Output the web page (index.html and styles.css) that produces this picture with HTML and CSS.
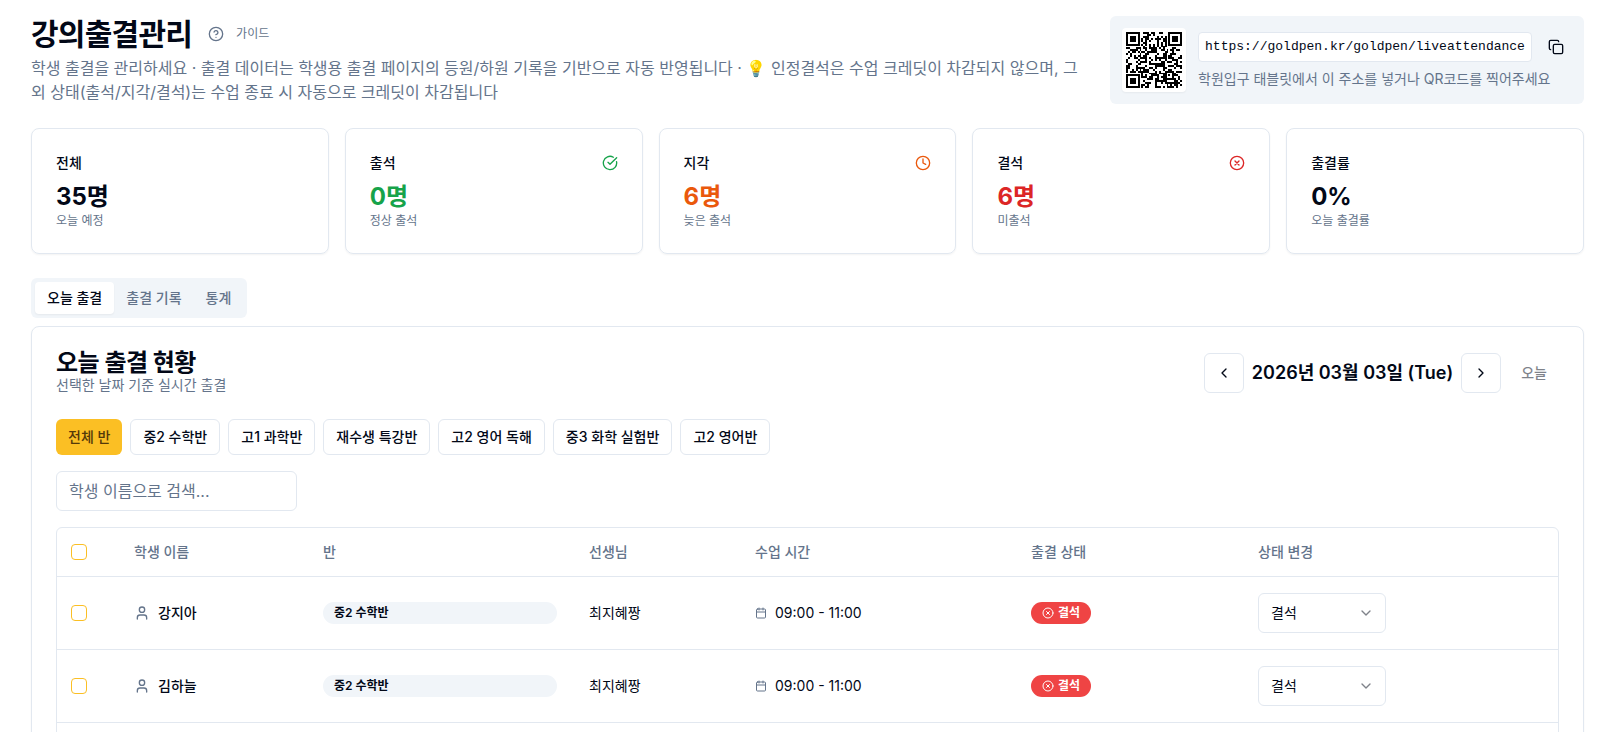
FILE: index.html
```html
<!DOCTYPE html>
<html lang="ko">
<head>
    <meta charset="UTF-8">
    <meta name="viewport" content="width=device-width, initial-scale=1.0">
    <title>강의출결관리</title>
    <link rel="stylesheet" href="styles.css">
</head>
<body>
    <!-- shared icons -->
    <svg class="sprite" aria-hidden="true">
        <symbol id="i-x-circle" viewBox="0 0 24 24"><circle cx="12" cy="12" r="10"/><path d="m15 9-6 6M9 9l6 6"/></symbol>
        <symbol id="i-user" viewBox="0 0 24 24"><path d="M19 21v-2a4 4 0 0 0-4-4H9a4 4 0 0 0-4 4v2"/><circle cx="12" cy="7" r="4"/></symbol>
        <symbol id="i-calendar" viewBox="0 0 24 24"><path d="M8 2v4M16 2v4M3 10h18"/><rect x="3" y="4" width="18" height="18" rx="2"/></symbol>
        <symbol id="i-down" viewBox="0 0 24 24"><path d="m6 9 6 6 6-6"/></symbol>
    </svg>

    <main class="page">
        <header class="page-header">
            <div class="intro">
                <div class="title-row">
                    <h1>강의출결관리</h1>
                    <button type="button" class="guide">
                        <svg class="icon" viewBox="0 0 24 24"><circle cx="12" cy="12" r="10"/><path d="M9.09 9a3 3 0 0 1 5.83 1c0 2-3 3-3 3M12 17h.01"/></svg>
                        가이드
                    </button>
                </div>
                <p>학생 출결을 관리하세요 · 출결 데이터는 학생용 출결 페이지의 등원/하원 기록을 기반으로 자동 반영됩니다 · 💡 인정결석은 수업 크레딧이 차감되지 않으며, 그 외 상태(출석/지각/결석)는 수업 종료 시 자동으로 크레딧이 차감됩니다</p>
            </div>
            <div class="share">
                <div class="qr"><svg id="qr" viewBox="0 0 29 29" shape-rendering="crispEdges"><path id="qrPath"/></svg></div>
                <div class="share-text">
                    <div class="url-row">
                        <code id="url">https://goldpen.kr/goldpen/liveattendance</code>
                        <button type="button" class="copy" aria-label="복사">
                            <svg class="icon" viewBox="0 0 24 24"><rect x="8" y="8" width="14" height="14" rx="2"/><path d="M4 16c-1.100 0-2-.9-2-2V4c0-1.100.9-2 2-2h10c1.100 0 2 .9 2 2"/></svg>
                        </button>
                    </div>
                    <p>학원입구 태블릿에서 이 주소를 넣거나 QR코드를 찍어주세요</p>
                </div>
            </div>
        </header>

        <section class="stats">
            <div class="stat">
                <div class="stat-head"><h3>전체</h3></div>
                <div class="number">35명</div>
                <p>오늘 예정</p>
            </div>
            <div class="stat green">
                <div class="stat-head">
                    <h3>출석</h3>
                    <svg class="icon" viewBox="0 0 24 24"><path d="M21.801 10A10 10 0 1 1 17 3.335"/><path d="m9 11 3 3L22 4"/></svg>
                </div>
                <div class="number">0명</div>
                <p>정상 출석</p>
            </div>
            <div class="stat orange">
                <div class="stat-head">
                    <h3>지각</h3>
                    <svg class="icon" viewBox="0 0 24 24"><circle cx="12" cy="12" r="10"/><path d="M12 6v6l4 2"/></svg>
                </div>
                <div class="number">6명</div>
                <p>늦은 출석</p>
            </div>
            <div class="stat red">
                <div class="stat-head">
                    <h3>결석</h3>
                    <svg class="icon"><use href="#i-x-circle"/></svg>
                </div>
                <div class="number">6명</div>
                <p>미출석</p>
            </div>
            <div class="stat">
                <div class="stat-head"><h3>출결률</h3></div>
                <div class="number">0%</div>
                <p>오늘 출결률</p>
            </div>
        </section>

        <div class="tabs" role="tablist">
            <button type="button" role="tab" aria-selected="true" class="active">오늘 출결</button>
            <button type="button" role="tab" aria-selected="false">출결 기록</button>
            <button type="button" role="tab" aria-selected="false">통계</button>
        </div>

        <section class="panel">
            <div class="panel-header">
                <div>
                    <h2>오늘 출결 현황</h2>
                    <p>선택한 날짜 기준 실시간 출결</p>
                </div>
                <div class="date-nav">
                    <button type="button" class="square" aria-label="이전 날짜"><svg class="icon" viewBox="0 0 24 24"><path d="m15 18-6-6 6-6"/></svg></button>
                    <span class="date">2026년 03월 03일 (Tue)</span>
                    <button type="button" class="square" aria-label="다음 날짜"><svg class="icon" viewBox="0 0 24 24"><path d="m9 18 6-6-6-6"/></svg></button>
                    <button type="button" class="today" disabled>오늘</button>
                </div>
            </div>

            <div class="filters">
                <button type="button" class="active">전체 반</button>
                <button type="button">중2 수학반</button>
                <button type="button">고1 과학반</button>
                <button type="button">재수생 특강반</button>
                <button type="button">고2 영어 독해</button>
                <button type="button">중3 화학 실험반</button>
                <button type="button">고2 영어반</button>
            </div>

            <input type="text" class="search" placeholder="학생 이름으로 검색..." aria-label="학생 이름으로 검색">

            <div class="table-wrap">
                <table>
                    <colgroup>
                        <col class="c-check"><col class="c-name"><col class="c-class"><col class="c-teacher"><col class="c-time"><col class="c-status"><col class="c-change">
                    </colgroup>
                    <thead>
                        <tr>
                            <th><input type="checkbox" aria-label="전체 선택"></th>
                            <th>학생 이름</th>
                            <th>반</th>
                            <th>선생님</th>
                            <th>수업 시간</th>
                            <th>출결 상태</th>
                            <th>상태 변경</th>
                        </tr>
                    </thead>
                    <tbody>
                        <tr>
                            <td><input type="checkbox" aria-label="강지아 선택"></td>
                            <td><div class="cell name"><svg class="icon muted"><use href="#i-user"/></svg>강지아</div></td>
                            <td><div class="badge">중2 수학반</div></td>
                            <td>최지혜짱</td>
                            <td><div class="cell"><svg class="icon small muted"><use href="#i-calendar"/></svg>09:00 - 11:00</div></td>
                            <td><div class="badge absent"><svg class="icon small"><use href="#i-x-circle"/></svg>결석</div></td>
                            <td>
                                <div class="select">
                                    <select aria-label="강지아 상태 변경"><option>결석</option></select>
                                    <svg class="icon"><use href="#i-down"/></svg>
                                </div>
                            </td>
                        </tr>
                        <tr>
                            <td><input type="checkbox" aria-label="김하늘 선택"></td>
                            <td><div class="cell name"><svg class="icon muted"><use href="#i-user"/></svg>김하늘</div></td>
                            <td><div class="badge">중2 수학반</div></td>
                            <td>최지혜짱</td>
                            <td><div class="cell"><svg class="icon small muted"><use href="#i-calendar"/></svg>09:00 - 11:00</div></td>
                            <td><div class="badge absent"><svg class="icon small"><use href="#i-x-circle"/></svg>결석</div></td>
                            <td>
                                <div class="select">
                                    <select aria-label="김하늘 상태 변경"><option>결석</option></select>
                                    <svg class="icon"><use href="#i-down"/></svg>
                                </div>
                            </td>
                        </tr>
                    </tbody>
                </table>
            </div>
        </section>
    </main>
    <script src="qr.js"></script>
</body>
</html>
```
FILE: styles.css
```css
* {
    box-sizing: border-box;
}
body {
    margin: 0;
    font-family: Inter, "Noto Sans CJK KR", sans-serif;
    font-size: 14px;
    line-height: 20px;
    color: #020817;
    background-color: #ffffff;
}
h1, h2, h3, p {
    margin: 0;
}
button, input, select {
    font: inherit;
    color: inherit;
}
button {
    display: inline-flex;
    align-items: center;
    justify-content: center;
    padding: 0;
    border: none;
    background: none;
    white-space: nowrap;
    cursor: pointer;
}
.sprite {
    display: none;
}
.icon {
    width: 16px;
    height: 16px;
    flex-shrink: 0;
    fill: none;
    stroke: currentColor;
    stroke-width: 2;
    stroke-linecap: round;
    stroke-linejoin: round;
}
.icon.small {
    width: 12px;
    height: 12px;
}
.icon.muted {
    color: #64748b;
}
.page {
    padding: 16px 38px 24px 31px;
}

/* header */
.page-header {
    display: flex;
    justify-content: space-between;
    gap: 24px;
    margin-bottom: 24px;
}
.intro {
    flex: 1;
}
.title-row {
    display: flex;
    align-items: center;
    gap: 16px;
    margin-bottom: 4px;
}
h1 {
    font-size: 30px;
    line-height: 36px;
    font-weight: 700;
    letter-spacing: -0.025em;
}
.guide {
    gap: 12px;
    font-size: 12px;
    color: #64748b;
}
.intro p {
    font-size: 16px;
    line-height: 24px;
    color: #64748b;
}
.share {
    display: flex;
    align-items: center;
    gap: 12px;
    width: 474px;
    padding: 12px;
    border-radius: 6px;
    background-color: #f1f5f9;
}
.qr {
    padding: 4px;
    border-radius: 4px;
    background-color: #ffffff;
    box-shadow: 0 1px 2px rgba(0, 0, 0, 0.05);
}
.qr svg {
    display: block;
    width: 56px;
    height: 56px;
}
.share-text {
    flex: 1;
}
.url-row {
    display: flex;
    align-items: center;
    gap: 8px;
    margin-bottom: 6px;
}
.url-row code {
    flex: 1;
    padding: 4px 6px;
    border: 1px solid #e2e8f0;
    border-radius: 4px;
    background-color: #ffffff;
    font-family: "Liberation Mono", monospace;
    font-size: 13px;
    text-align: center;
}
.copy {
    width: 32px;
    height: 32px;
}
.share-text p {
    color: #64748b;
}

/* stat cards */
.stats {
    display: grid;
    grid-template-columns: repeat(5, 1fr);
    gap: 16px;
    margin-bottom: 24px;
}
.stat {
    padding: 24px;
    border: 1px solid #e2e8f0;
    border-radius: 8px;
    box-shadow: 0 1px 2px rgba(0, 0, 0, 0.05);
}
.stat-head {
    display: flex;
    align-items: center;
    justify-content: space-between;
    margin-bottom: 8px;
}
.stat h3 {
    font-size: 14px;
    font-weight: 500;
}
.number {
    font-size: 24px;
    line-height: 32px;
    font-weight: 700;
}
.stat p {
    font-size: 12px;
    line-height: 16px;
    color: #64748b;
}
.green .icon, .green .number {
    color: #16a34a;
}
.orange .icon, .orange .number {
    color: #ea580c;
}
.red .icon, .red .number {
    color: #dc2626;
}

/* tabs */
.tabs {
    display: inline-flex;
    padding: 4px;
    margin-bottom: 8px;
    border-radius: 6px;
    background-color: #f1f5f9;
    vertical-align: top;
}
.tabs button {
    padding: 6px 12px;
    border-radius: 4px;
    font-weight: 500;
    color: #64748b;
}
.tabs .active {
    color: #020817;
    background-color: #ffffff;
    box-shadow: 0 1px 2px rgba(0, 0, 0, 0.05);
}

/* attendance panel */
.panel {
    padding: 24px;
    border: 1px solid #e2e8f0;
    border-radius: 8px;
    box-shadow: 0 1px 2px rgba(0, 0, 0, 0.05);
}
.panel-header {
    display: flex;
    align-items: center;
    justify-content: space-between;
    margin-bottom: 24px;
}
h2 {
    font-size: 24px;
    line-height: 24px;
    font-weight: 600;
    letter-spacing: -0.025em;
}
.panel-header p {
    color: #64748b;
}
.date-nav {
    display: flex;
    align-items: center;
    gap: 8px;
}
.square {
    width: 40px;
    height: 40px;
    border: 1px solid #e2e8f0;
    border-radius: 6px;
}
.date {
    font-size: 18px;
    line-height: 28px;
    font-weight: 600;
}
.today {
    padding: 8px 12px;
    font-weight: 500;
    opacity: 0.5;
}
.filters {
    display: flex;
    flex-wrap: wrap;
    gap: 8px;
    margin-bottom: 16px;
}
.filters button {
    height: 36px;
    padding: 0 12px;
    border: 1px solid #e2e8f0;
    border-radius: 6px;
    font-weight: 500;
}
.filters .active {
    border: none;
    background-color: #fbbf24;
    color: #54390a;
}
.search {
    display: block;
    width: 241px;
    height: 40px;
    padding: 8px 12px;
    margin-bottom: 16px;
    border: 1px solid #e2e8f0;
    border-radius: 6px;
    font-size: 16px;
}
.search::placeholder {
    color: #64748b;
}

/* table */
.table-wrap {
    padding-bottom: 16px;
    border: 1px solid #e2e8f0;
    border-radius: 6px;
}
table {
    width: 100%;
    table-layout: fixed;
    border-spacing: 0;
}
.c-check { width: 61px; }
.c-name { width: 189px; }
.c-class { width: 266px; }
.c-teacher { width: 166px; }
.c-time { width: 276px; }
.c-status { width: 227px; }
.c-change { width: 316px; }
th, td {
    padding: 0 16px;
    border-bottom: 1px solid #e2e8f0;
    text-align: left;
    vertical-align: middle;
}
th {
    height: 49px;
    font-weight: 500;
    color: #64748b;
}
td {
    height: 73px;
}
th:first-child, td:first-child {
    padding: 0 14px;
}
input[type="checkbox"] {
    appearance: none;
    display: block;
    width: 16px;
    height: 16px;
    margin: 0;
    border: 1px solid #fbbf24;
    border-radius: 4px;
}
.cell {
    display: flex;
    align-items: center;
    gap: 8px;
}
.name {
    font-weight: 500;
}
.badge {
    padding: 3px 11px;
    border-radius: 11px;
    background-color: #f1f5f9;
    font-size: 12px;
    line-height: 16px;
    font-weight: 600;
}
.absent {
    display: inline-flex;
    align-items: center;
    gap: 4px;
    vertical-align: middle;
    background-color: #ef4444;
    color: #ffffff;
}
.select {
    position: relative;
    width: 128px;
}
.select select {
    appearance: none;
    display: block;
    width: 100%;
    height: 40px;
    padding: 0 12px;
    border: 1px solid #e2e8f0;
    border-radius: 6px;
    background-color: #ffffff;
}
.select .icon {
    position: absolute;
    top: 12px;
    right: 12px;
    opacity: 0.5;
    pointer-events: none;
}
```
FILE: qr.js
```js
// QR code for the attendance page url (version 3, level L)
var SIZE = 29, DATA = 55, EC = 15;
var text = document.getElementById('url').textContent;

// GF(256) tables
var exp = [], log = [];
for (var i = 0, v = 1; i < 255; i++) {
    exp[i] = v;
    log[v] = i;
    v <<= 1;
    if (v > 255) v ^= 0x11d;
}
function mul(a, b) {
    return a && b ? exp[(log[a] + log[b]) % 255] : 0;
}

function encode(text) {
    var bits = '';
    function put(value, len) {
        bits += value.toString(2).padStart(len, '0');
    }
    put(4, 4);
    put(text.length, 8);
    for (var c of text) put(c.charCodeAt(0), 8);
    put(0, 4);
    for (var pad = 0xec; bits.length < DATA * 8; pad ^= 0xec ^ 0x11) put(pad, 8);

    var data = bits.match(/.{8}/g).map(b => parseInt(b, 2));
    var gen = [1];
    for (var i = 0; i < EC; i++) {
        var next = gen.concat(0);
        gen.forEach((g, j) => next[j + 1] ^= mul(g, exp[i]));
        gen = next;
    }
    var rem = data.concat(new Array(EC).fill(0));
    for (var i = 0; i < DATA; i++) {
        var f = rem[i];
        gen.forEach((g, j) => rem[i + j] ^= mul(g, f));
    }
    rem.slice(DATA).forEach(b => put(b, 8));
    return bits;
}

var masks = [
    (r, c) => (r + c) % 2 == 0,
    (r, c) => r % 2 == 0,
    (r, c) => c % 3 == 0,
    (r, c) => (r + c) % 3 == 0,
    (r, c) => (Math.floor(r / 2) + Math.floor(c / 3)) % 2 == 0,
    (r, c) => (r * c) % 2 + (r * c) % 3 == 0,
    (r, c) => ((r * c) % 2 + (r * c) % 3) % 2 == 0,
    (r, c) => ((r + c) % 2 + (r * c) % 3) % 2 == 0
];

function build(bits, mask) {
    var m = Array.from({ length: SIZE }, () => new Array(SIZE).fill(null));
    function square(row, col, radius, light) {
        for (var r = -radius; r <= radius; r++)
            for (var c = -radius; c <= radius; c++) {
                if (row + r < 0 || col + c < 0 || row + r >= SIZE || col + c >= SIZE) continue;
                m[row + r][col + c] = light.indexOf(Math.max(Math.abs(r), Math.abs(c))) < 0;
            }
    }
    square(3, 3, 4, [2, 4]);
    square(3, SIZE - 4, 4, [2, 4]);
    square(SIZE - 4, 3, 4, [2, 4]);
    square(22, 22, 2, [1]);
    for (var i = 8; i < SIZE - 8; i++) m[6][i] = m[i][6] = i % 2 == 0;

    // format info
    var rem = 8 | mask, format = rem;
    for (var i = 0; i < 10; i++) rem = (rem << 1) ^ ((rem >> 9) * 0x537);
    format = ((format << 10) | rem) ^ 0x5412;
    for (var i = 0; i < 15; i++) {
        var on = ((format >> i) & 1) == 1;
        m[i < 6 ? i : i < 8 ? i + 1 : SIZE - 15 + i][8] = on;
        m[8][i < 8 ? SIZE - 1 - i : i < 9 ? 7 : 14 - i] = on;
    }
    m[SIZE - 8][8] = true;

    var n = 0, up = true;
    for (var right = SIZE - 1; right > 0; right -= 2) {
        if (right == 6) right = 5;
        for (var k = 0; k < SIZE; k++) {
            var row = up ? SIZE - 1 - k : k;
            for (var col = right; col > right - 2; col--) {
                if (m[row][col] !== null) continue;
                m[row][col] = (bits[n++] == '1') != masks[mask](row, col);
            }
        }
        up = !up;
    }
    return m;
}

function penalty(m) {
    var score = 0, dark = 0;
    var cols = m.map((_, i) => m.map(r => r[i]));
    m.concat(cols).forEach(function(line) {
        var s = line.map(Number).join('');
        (s.match(/0{5,}|1{5,}/g) || []).forEach(run => score += run.length - 2);
        for (var i = 0; i < SIZE - 10; i++) {
            var part = s.substr(i, 11);
            if (part == '10111010000' || part == '00001011101') score += 40;
        }
    });
    for (var r = 0; r < SIZE; r++)
        for (var c = 0; c < SIZE; c++) {
            dark += m[r][c] ? 1 : 0;
            if (r && c && m[r][c] == m[r - 1][c] && m[r][c] == m[r][c - 1] && m[r][c] == m[r - 1][c - 1]) score += 3;
        }
    return score + Math.floor(Math.abs(dark * 20 / (SIZE * SIZE) - 10)) * 10;
}

var bits = encode(text);
var best = masks.map((_, i) => build(bits, i)).sort((a, b) => penalty(a) - penalty(b))[0];
var d = '';
best.forEach((row, y) => row.forEach((on, x) => { if (on) d += 'M' + x + ' ' + y + 'h1v1h-1z'; }));
document.getElementById('qrPath').setAttribute('d', d);
```
